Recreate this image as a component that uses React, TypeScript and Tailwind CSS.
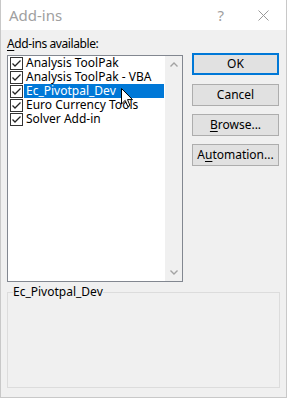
import React from "react";

const items = [
  "Analysis ToolPak",
  "Analysis ToolPak - VBA",
  "Ec_Pivotpal_Dev",
  "Euro Currency Tools",
  "Solver Add-in",
];

function Check() {
  return (
    <svg width="13" height="13" viewBox="0 0 13 13" className="shrink-0">
      <rect x="0.5" y="0.5" width="12" height="12" fill="#fff" stroke="#333" />
      <path d="M2.5 6.5 L5 9 L10.5 3.5" fill="none" stroke="#222" strokeWidth="1.3" />
    </svg>
  );
}

function Btn({ children, primary }: { children: React.ReactNode; primary?: boolean }) {
  return (
    <div
      className={
        "h-[22px] w-[87px] flex items-center justify-center bg-[#e1e1e1] text-[12px] text-black " +
        (primary ? "border-2 border-[#0078d7]" : "border border-[#adadad]")
      }
    >
      {children}
    </div>
  );
}

export default function App() {
  return (
    <div
      className="w-[287px] h-[398px] bg-[#f0f0f0] border-x border-b border-[#c8c8c8] flex flex-col"
      style={{ fontFamily: '"Noto Sans", "Open Sans", sans-serif' }}
    >
      <div className="h-[30px] bg-white flex items-center shrink-0">
        <span className="ml-[8px] text-[15px] text-[#a0a0a0]">Add-ins</span>
        <span className="ml-auto text-[15px] text-[#a0a0a0] mr-[34px]">?</span>
        <svg width="11" height="11" viewBox="0 0 11 11" className="mr-[17px]">
          <path d="M0.5 0.5 L10.5 10.5 M10.5 0.5 L0.5 10.5" stroke="#999" strokeWidth="1" />
        </svg>
      </div>
      <div className="pl-[6px] pt-[6px] flex flex-col">
        <div className="flex">
          <div className="w-[176px] flex flex-col">
            <div className="h-[16px] leading-[16px] text-[12px] text-black mb-[3px] tracking-[-0.4px]">
              <span className="underline underline-offset-2">A</span>dd-ins available:
            </div>
            <div className="relative h-[227px] border border-[#828790] bg-white flex">
              <div className="flex-1 flex flex-col">
                {items.map((t, i) => (
                  <div key={t} className="h-[14px] flex items-center">
                    <div className="ml-[2px]">
                      <Check />
                    </div>
                    <div
                      className={
                        "ml-[1px] h-[14px] w-[140px] pl-[2px] flex items-center text-[12px] leading-[14px] whitespace-nowrap " +
                        (i === 2 ? "bg-[#0078d7] text-white" : "text-black")
                      }
                    >
                      {t}
                    </div>
                  </div>
                ))}
              </div>
              <div className="w-[17px] bg-[#f0f0f0] flex flex-col items-center justify-between py-[6px]">
                <svg width="8" height="5" viewBox="0 0 8 5">
                  <path d="M0.5 4.5 L4 1 L7.5 4.5" fill="none" stroke="#a3a3a3" strokeWidth="1.4" />
                </svg>
                <svg width="8" height="5" viewBox="0 0 8 5">
                  <path d="M0.5 0.5 L4 4 L7.5 0.5" fill="none" stroke="#a3a3a3" strokeWidth="1.4" />
                </svg>
              </div>
              <svg
                className="absolute left-[113px] top-[32px]"
                width="13"
                height="20"
                viewBox="0 0 13 20"
              >
                <path
                  d="M0.5 0.5 L0.5 16 L4.2 12.4 L6.8 18.5 L9 17.6 L6.5 11.6 L11.5 11.6 Z"
                  fill="#fff"
                  stroke="#000"
                  strokeWidth="1"
                  strokeLinejoin="miter"
                />
              </svg>
            </div>
          </div>
          <div className="ml-[9px] mt-[17px] flex flex-col">
            <Btn primary>OK</Btn>
            <div className="mt-[9px]">
              <Btn>Cancel</Btn>
            </div>
            <div className="mt-[8px]">
              <Btn>
                <span className="underline underline-offset-2">B</span>rowse...
              </Btn>
            </div>
            <div className="mt-[8px]">
              <Btn>
                A<span className="underline underline-offset-2">u</span>tomation...
              </Btn>
            </div>
          </div>
        </div>
        <fieldset className="mt-[2px] w-[273px] h-[104px] border border-[#dcdcdc]">
          <legend className="ml-[5px] text-[12px] leading-[16px] text-black">Ec_Pivotpal_Dev</legend>
        </fieldset>
      </div>
    </div>
  );
}
